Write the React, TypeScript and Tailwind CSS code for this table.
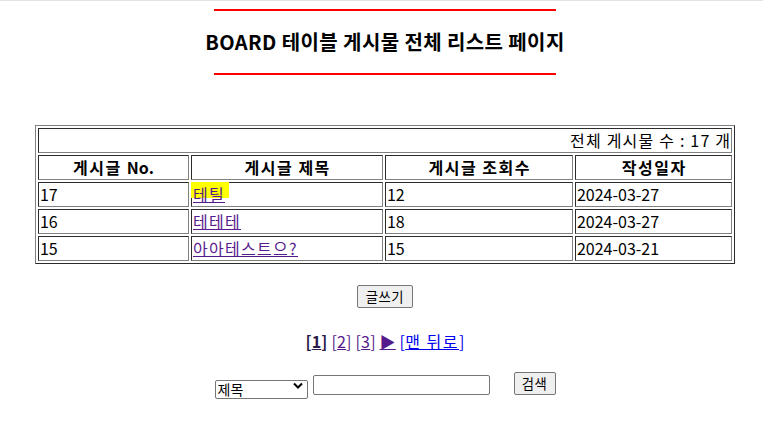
import React from "react";

const rows = [
  { no: 17, title: "테틸", views: 12, date: "2024-03-27", hl: true },
  { no: 16, title: "테테테", views: 18, date: "2024-03-27", hl: false },
  { no: 15, title: "아아테스트으?", views: 15, date: "2024-03-21", hl: false },
];

const cell =
  "h-[25px] border border-[gray] [border-style:inset] px-[1px] py-0 leading-[21px] align-middle";

export default function App() {
  return (
    <div
      className="min-h-[439px] w-full bg-white text-black text-[16px]"
      style={{ fontFamily: '"Noto Sans CJK KR", "Noto Sans", sans-serif' }}
    >
      <div className="h-px w-full bg-[#e3e3e3]" />
      <div className="flex flex-col items-center pl-[7px]">
        <div className="mt-[8px] h-[2px] w-[342px] bg-[#ff0000]" />
        <div className="flex h-[62px] items-center justify-center">
          <h2 className="text-[20px] font-bold leading-[24px] tracking-[0.4px]">
            BOARD 테이블 게시물 전체 리스트 페이지
          </h2>
        </div>
        <div className="h-[2px] w-[342px] bg-[#ff0000]" />

        <table className="mt-[50px] w-[700px] table-fixed border-separate border-spacing-[2px] border border-[gray] [border-style:outset]">
          <colgroup>
            <col className="w-[151px]" />
            <col className="w-[192px]" />
            <col className="w-[188px]" />
            <col className="w-[157px]" />
          </colgroup>
          <tbody>
            <tr>
              <td colSpan={4} className={`${cell} text-right`}>
                <span className="tracking-[1.2px]">전체 게시물 수 : 17 </span>개
              </td>
            </tr>
            <tr>
              <th className={`${cell} text-center font-bold`}>
                <span className="tracking-[1.5px]">게시글 </span>No.
              </th>
              <th className={`${cell} text-center font-bold`}>
                <span className="tracking-[1.5px]">게시글 제</span>목
              </th>
              <th className={`${cell} text-center font-bold`}>
                <span className="tracking-[1.5px]">게시글 조회</span>수
              </th>
              <th className={`${cell} text-center font-bold`}>
                <span className="tracking-[1.5px]">작성일</span>자
              </th>
            </tr>
            {rows.map((r) => (
              <tr key={r.no}>
                <td className={cell}>{r.no}</td>
                <td className={`${cell} relative`}>
                  {r.hl && (
                    <div className="absolute left-[-1px] top-[-1px] h-[16px] w-[38px] bg-[#ffff00]" />
                  )}
                  <a href="#" className="relative text-[#551a8b] underline tracking-[1.3px]">
                    {r.title}
                  </a>
                </td>
                <td className={cell}>{r.views}</td>
                <td className={cell}>{r.date}</td>
              </tr>
            ))}
          </tbody>
        </table>

        <button className="mt-[21px] h-[23px] w-[56px] rounded-[2px] border border-[#767676] bg-[#efefef] text-[13.33px] leading-[21px] tracking-[0.5px]">
          글쓰기
        </button>

        <div className="mt-[23px] h-[20px] text-[16px] leading-[20px] tracking-[0.2px]">
          <span className="font-bold text-[#2a1a4a]">
            [<span className="underline">1</span>]
          </span>{" "}
          <span className="text-[#551a8b]">
            [<a href="#" className="underline">2</a>]
          </span>{" "}
          <span className="text-[#551a8b]">
            [<a href="#" className="underline">3</a>]
          </span>{" "}
          <a href="#" className="text-[#551a8b] underline">
            ▶
          </a>{" "}
          <span className="text-[#0000ee]">
            [<a href="#" className="underline tracking-[1.5px]">맨 뒤로</a>]
          </span>
        </div>

        <div className="mt-[21px] flex h-[23px] items-end">
          <div className="relative h-[19px] w-[93px]">
            <select className="h-full w-full appearance-none rounded-[2px] border border-[#767676] bg-white pl-[2px] text-[14px] leading-[17px]">
              <option>제목</option>
            </select>
            <svg
              className="pointer-events-none absolute right-[5px] top-[6px]"
              width="10"
              height="7"
              viewBox="0 0 10 7"
            >
              <path d="M1 1.5 L5 5.5 L9 1.5" stroke="#000" strokeWidth="2" fill="none" />
            </svg>
          </div>
          <input
            type="text"
            className="ml-[5px] h-[20px] w-[177px] rounded-[2px] border border-[#767676] bg-white px-[2px] text-[13.33px]"
          />
          <button className="ml-[24px] h-[23px] w-[42px] rounded-[2px] border border-[#767676] bg-[#efefef] text-[13.33px] leading-[21px] tracking-[0.5px]">
            검색
          </button>
        </div>
      </div>
    </div>
  );
}
